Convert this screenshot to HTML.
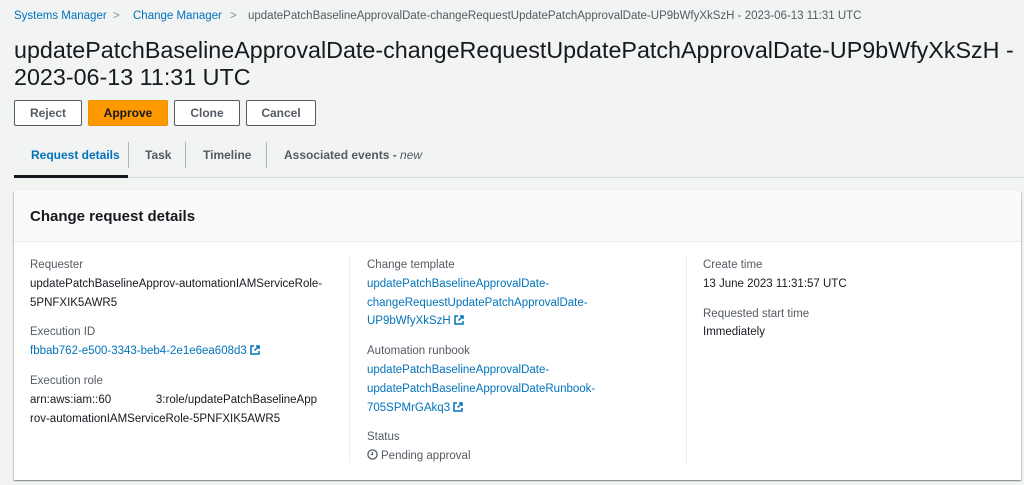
<!DOCTYPE html><html><head><style>
*{margin:0;padding:0;box-sizing:border-box}
body{width:1024px;height:485px;background:#f2f3f3;font-family:"Liberation Sans",sans-serif;position:relative;overflow:hidden;color:#16191f}
.a{position:absolute;white-space:nowrap}
.bc{font-size:11.5px;top:10px}
.lk{color:#0073bb}
h1{position:absolute;left:14px;top:37px;font-size:23.3px;font-weight:400;line-height:27px;color:#16191f;white-space:nowrap}
.btn{position:absolute;top:100px;height:26px;border:1px solid #545b64;border-radius:2px;background:#fff;font-size:12px;font-weight:bold;color:#545b64;text-align:center;line-height:24px}
.tab{position:absolute;top:148px;font-size:12px;font-weight:bold;color:#545b64}
.sep{position:absolute;top:142px;width:1px;height:26px;background:#aab7b8}
.card{position:absolute;left:14px;top:191px;width:1007px;height:289px;background:#fff;box-shadow:0 1px 1px rgba(0,28,36,.3),1px 1px 1px rgba(0,28,36,.15),-1px 1px 1px rgba(0,28,36,.15)}
.hd{height:51px;background:#fafafa;border-bottom:1px solid #eaeded;padding:17px 16px;font-size:15px;font-weight:bold}
.col{position:absolute;top:65px;font-size:11.5px;line-height:18.8px}
.lb{color:#545b64}
.v{margin-bottom:11px}
.vl{position:absolute;top:65px;width:1px;height:207px;background:#eaeded}
.ext{display:inline-block;width:10px;height:10px;vertical-align:-1px;margin-left:3px}
</style></head><body>
<div class="a bc lk" style="left:14px">Systems Manager</div>
<div class="a bc" style="left:113px;color:#879596">&gt;</div>
<div class="a bc lk" style="left:133px">Change Manager</div>
<div class="a bc" style="left:230px;color:#879596">&gt;</div>
<div class="a bc" style="left:248px;color:#545b64">updatePatchBaselineApprovalDate-changeRequestUpdatePatchApprovalDate-UP9bWfyXkSzH - 2023-06-13 11:31 UTC</div>
<h1>updatePatchBaselineApprovalDate-changeRequestUpdatePatchApprovalDate-UP9bWfyXkSzH -<br>2023-06-13 11:31 UTC</h1>
<div class="btn" style="left:14px;width:68px">Reject</div>
<div class="btn" style="left:88px;width:80px;border-color:#ec9100;color:#16191f;background:#ff9900">Approve</div>
<div class="btn" style="left:174px;width:66px">Clone</div>
<div class="btn" style="left:246px;width:70px">Cancel</div>
<div class="tab" style="left:31px;color:#0073bb">Request details</div>
<div class="sep" style="left:128px"></div>
<div class="tab" style="left:145px">Task</div>
<div class="sep" style="left:185px"></div>
<div class="tab" style="left:203px">Timeline</div>
<div class="sep" style="left:266px"></div>
<div class="tab" style="left:284px">Associated events - <i style="font-weight:400">new</i></div>
<div class="a" style="left:14px;top:177px;width:1010px;height:1px;background:#d5dbdb"></div>
<div class="a" style="left:14px;top:175px;width:114px;height:3px;background:#16191f"></div>
<div class="card"><div class="hd">Change request details</div>
<div class="col" style="left:16px">
<div class="lb">Requester</div><div class="v">updatePatchBaselineApprov-automationIAMServiceRole-<br>5PNFXIK5AWR5</div>
<div class="lb">Execution ID</div><div class="v lk">fbbab762-e500-3343-beb4-2e1e6ea608d3<svg class="ext" viewBox="0 0 10 10"><path d="M4 1H1v8h8V6M6 1h3v3M9 1L4.5 5.5" fill="none" stroke="#0073bb" stroke-width="1.5"/></svg></div>
<div class="lb">Execution role</div><div class="v">arn:aws:iam::60&nbsp;&nbsp;&nbsp;&nbsp;&nbsp;&nbsp;&nbsp;&nbsp;&nbsp;&nbsp;&nbsp;&nbsp;&nbsp;&nbsp;3:role/updatePatchBaselineApp<br>rov-automationIAMServiceRole-5PNFXIK5AWR5</div>
</div>
<div class="vl" style="left:335px"></div>
<div class="col" style="left:353px">
<div class="lb">Change template</div><div class="v lk">updatePatchBaselineApprovalDate-<br>changeRequestUpdatePatchApprovalDate-<br>UP9bWfyXkSzH<svg class="ext" viewBox="0 0 10 10"><path d="M4 1H1v8h8V6M6 1h3v3M9 1L4.5 5.5" fill="none" stroke="#0073bb" stroke-width="1.5"/></svg></div>
<div class="lb">Automation runbook</div><div class="v lk">updatePatchBaselineApprovalDate-<br>updatePatchBaselineApprovalDateRunbook-<br>705SPMrGAkq3<svg class="ext" viewBox="0 0 10 10"><path d="M4 1H1v8h8V6M6 1h3v3M9 1L4.5 5.5" fill="none" stroke="#0073bb" stroke-width="1.5"/></svg></div>
<div class="lb">Status</div><div style="color:#545b64"><svg width="11" height="11" viewBox="0 0 12 12" style="vertical-align:-1px;margin-right:3px"><circle cx="6" cy="6" r="5" fill="none" stroke="#545b64" stroke-width="1.4"/><path d="M6 3v3H4" fill="none" stroke="#545b64" stroke-width="1.4"/></svg>Pending approval</div>
</div>
<div class="vl" style="left:672px"></div>
<div class="col" style="left:689px">
<div class="lb">Create time</div><div class="v">13 June 2023 11:31:57 UTC</div>
<div class="lb">Requested start time</div><div class="v">Immediately</div>
</div>
</div>
</body></html>
